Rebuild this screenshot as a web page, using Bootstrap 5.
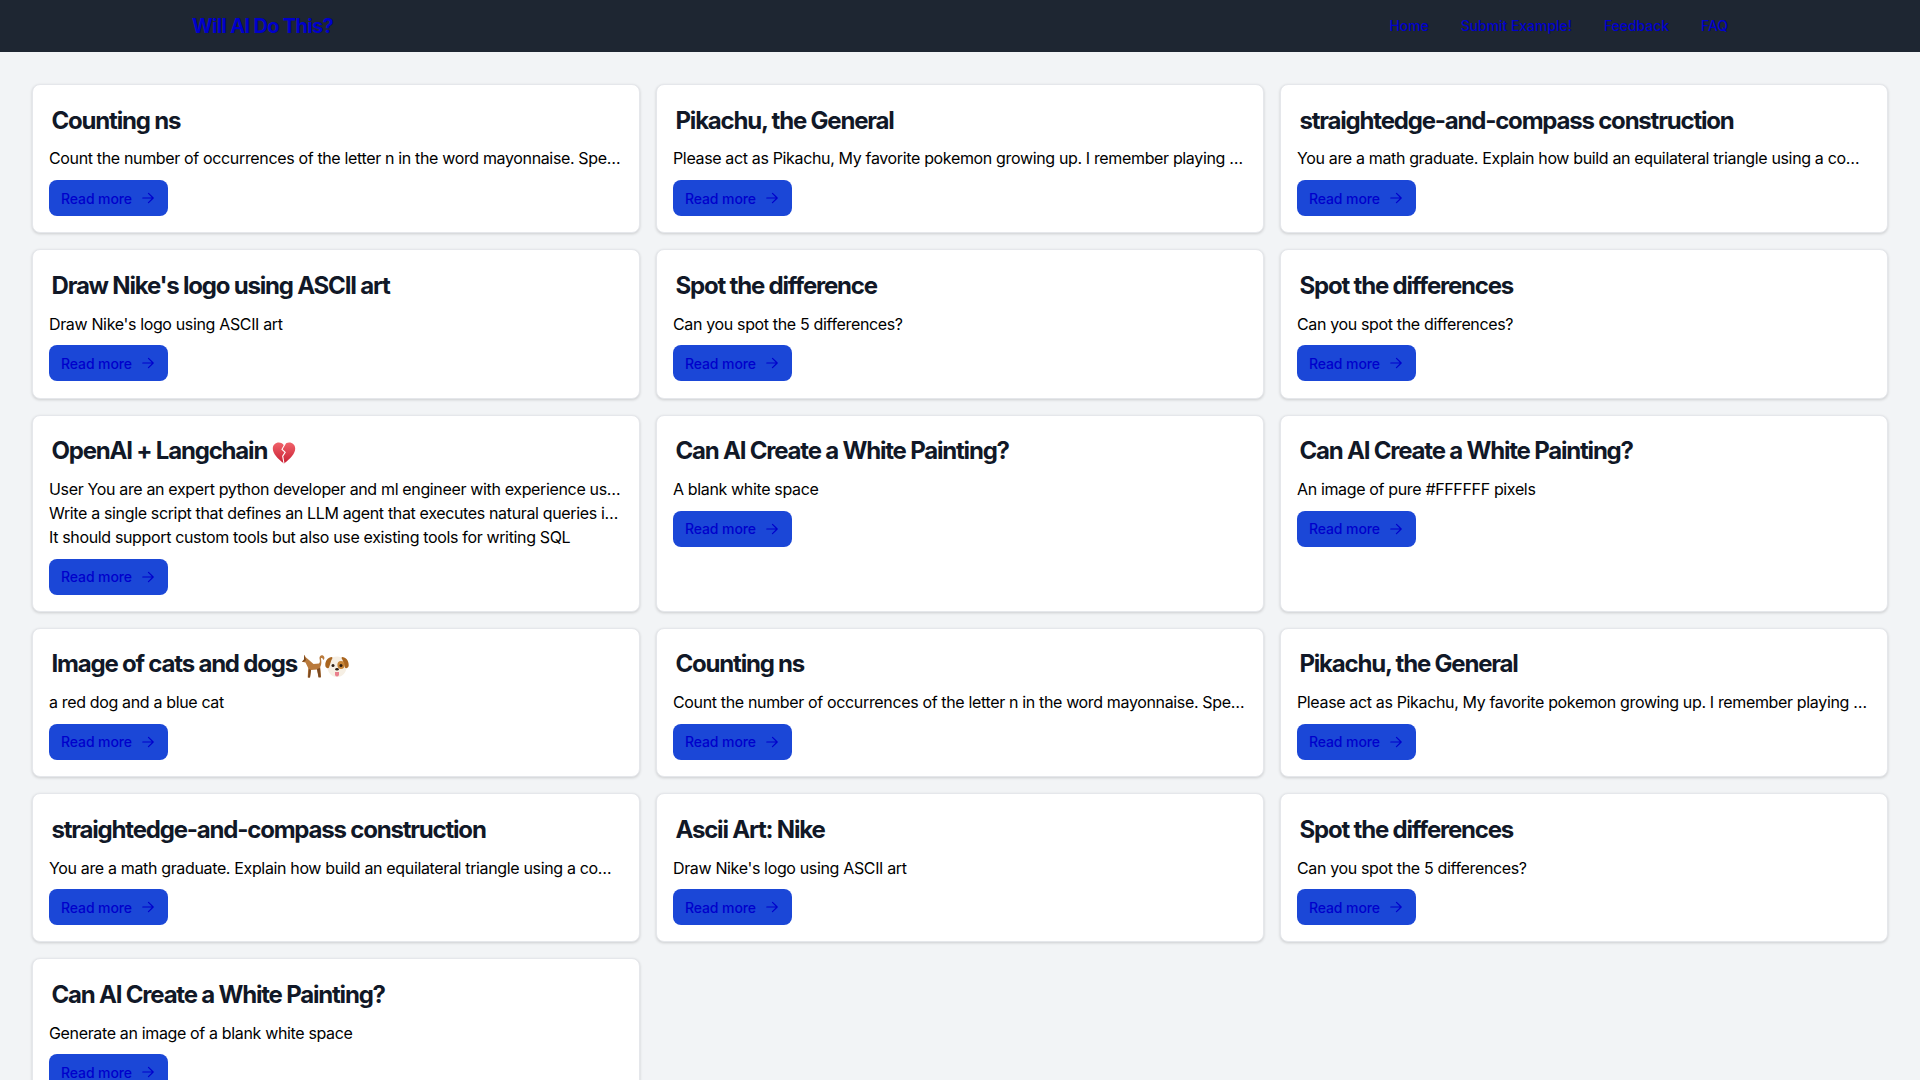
<!DOCTYPE html>
<html lang="en">
<head>
<meta charset="utf-8">
<title>Will AI Do This?</title>
<link href="https://cdn.jsdelivr.net/npm/bootstrap@5.3.0/dist/css/bootstrap.min.css" rel="stylesheet">
<style>
body{background:#f2f4f6;font-family:Inter,"Liberation Sans",sans-serif;color:#000;overflow:hidden;height:1080px}
.top-bar{background:#1e2632;height:52px;padding:0 192px}
.top-bar a{color:#0000cc;text-decoration:none}
.brand-link{font-size:20px;font-weight:700;line-height:28px;letter-spacing:-.7px}
.menu-link{font-size:14px;font-weight:500;letter-spacing:-.05px}
.menu-row{gap:32px;padding-bottom:2px}
.page-wrap{padding:32px}
.page-wrap .row{--bs-gutter-x:16px;--bs-gutter-y:16px}
.entry{background:#fff;border:1px solid #e5e7eb;border-radius:8px;box-shadow:0 1px 3px rgba(0,0,0,.16);padding:16px 16px 16.2px}
.entry-title{font-size:24px;font-weight:700;line-height:32px;letter-spacing:-1.2px;color:#111827;margin:0 0 9.8px;padding:3.7px 2.5px 0}
.entry-text{font-size:16px;line-height:24px;margin:0;letter-spacing:-.35px}
.entry-text+.read-btn{margin-top:9.6px}
.read-btn{background:#1b47d7;color:#0000cc;border-radius:8px;height:36px;width:119px;font-size:14px;font-weight:500;padding:0 12px;text-decoration:none;align-self:flex-start;justify-content:space-between;white-space:nowrap;letter-spacing:-.1px}
.read-btn svg{width:12px;height:12px;flex:none;margin-right:2px}
.emo{display:inline-block;height:24px;line-height:0;vertical-align:0}
</style>
</head>
<body>
<svg width="0" height="0" class="d-block">
  <defs>
    <symbol id="ar" viewBox="0 0 12 12"><path d="M.8 6h10.400M6.500 1.300 11.200 6l-4.700 4.700" fill="none" stroke="currentColor" stroke-width="1.200" stroke-linecap="round" stroke-linejoin="round"/></symbol>
    <linearGradient id="hg" x1="0" y1="0" x2="0" y2="1"><stop offset="0" stop-color="#f0626a"/><stop offset="1" stop-color="#c91f33"/></linearGradient>
  </defs>
</svg>
<nav class="top-bar d-flex align-items-center justify-content-between">
  <a class="brand-link" href="#">Will AI Do This?</a>
  <div class="menu-row d-flex">
    <a class="menu-link" href="#">Home</a>
    <a class="menu-link" href="#">Submit Example!</a>
    <a class="menu-link" href="#">Feedback</a>
    <a class="menu-link" href="#">FAQ</a>
  </div>
</nav>
<main class="page-wrap">
<div class="row row-cols-3">
<div class="col"><div class="entry h-100 d-flex flex-column"><h5 class="entry-title">Counting ns</h5><p class="entry-text text-truncate">Count the number of occurrences of the letter n in the word mayonnaise. Spell out each letter and count them.</p><a class="read-btn d-flex align-items-center" href="#">Read more <svg><use href="#ar"/></svg></a></div></div>
<div class="col"><div class="entry h-100 d-flex flex-column"><h5 class="entry-title">Pikachu, the General</h5><p class="entry-text text-truncate">Please act as Pikachu, My favorite pokemon growing up. I remember playing with all of my cards and friends.</p><a class="read-btn d-flex align-items-center" href="#">Read more <svg><use href="#ar"/></svg></a></div></div>
<div class="col"><div class="entry h-100 d-flex flex-column"><h5 class="entry-title">straightedge-and-compass construction</h5><p class="entry-text text-truncate">You are a math graduate. Explain how build an equilateral triangle using a compass and a straightedge.</p><a class="read-btn d-flex align-items-center" href="#">Read more <svg><use href="#ar"/></svg></a></div></div>
<div class="col"><div class="entry h-100 d-flex flex-column"><h5 class="entry-title">Draw Nike's logo using ASCII art</h5><p class="entry-text text-truncate">Draw Nike's logo using ASCII art</p><a class="read-btn d-flex align-items-center" href="#">Read more <svg><use href="#ar"/></svg></a></div></div>
<div class="col"><div class="entry h-100 d-flex flex-column"><h5 class="entry-title">Spot the difference</h5><p class="entry-text text-truncate">Can you spot the 5 differences?</p><a class="read-btn d-flex align-items-center" href="#">Read more <svg><use href="#ar"/></svg></a></div></div>
<div class="col"><div class="entry h-100 d-flex flex-column"><h5 class="entry-title">Spot the differences</h5><p class="entry-text text-truncate">Can you spot the differences?</p><a class="read-btn d-flex align-items-center" href="#">Read more <svg><use href="#ar"/></svg></a></div></div>
<div class="col"><div class="entry h-100 d-flex flex-column"><h5 class="entry-title">OpenAI + Langchain <span class="emo"><svg width="24" height="24" viewBox="0 0 24 24"><path d="M12 22.500C5.500 17.500.8 12.700.8 7.500.8 4 3.500 1.500 6.800 1.500 9 1.500 11 2.700 12 4.400 13 2.700 15 1.500 17.200 1.500 20.500 1.500 23.200 4 23.200 7.500 23.200 12.700 18.500 17.500 12 22.500z" fill="url(#hg)"/><path d="M13.500 2.300 10 8.300l3.200 3-2.500 3.800 1.300 7.400" fill="none" stroke="#fff" stroke-width="1.100"/></svg></span></h5><p class="entry-text text-truncate">User You are an expert python developer and ml engineer with experience using LangChain and SQL</p><p class="entry-text text-truncate">Write a single script that defines an LLM agent that executes natural queries in a SQL database</p><p class="entry-text text-truncate">It should support custom tools but also use existing tools for writing SQL</p><a class="read-btn d-flex align-items-center" href="#">Read more <svg><use href="#ar"/></svg></a></div></div>
<div class="col"><div class="entry h-100 d-flex flex-column"><h5 class="entry-title">Can AI Create a White Painting?</h5><p class="entry-text text-truncate">A blank white space</p><a class="read-btn d-flex align-items-center" href="#">Read more <svg><use href="#ar"/></svg></a></div></div>
<div class="col"><div class="entry h-100 d-flex flex-column"><h5 class="entry-title">Can AI Create a White Painting?</h5><p class="entry-text text-truncate">An image of pure #FFFFFF pixels</p><a class="read-btn d-flex align-items-center" href="#">Read more <svg><use href="#ar"/></svg></a></div></div>
<div class="col"><div class="entry h-100 d-flex flex-column"><h5 class="entry-title">Image of cats and dogs <span class="emo"><svg width="24" height="24" viewBox="0 0 24 24"><path d="M3 .8 5 3.500 8 6l4.500 4L18 9.500c1.200-1 1-3 .5-5C18.200 2.500 20 .5 22 1.500c1.800 1 1.800 3.500.5 4.500l-1-1.500c-.5-.8-1.800-.5-1.500.5.500 2.500.7 5.500-.8 8l.8 10h-2.300L16 15.500 10 16l-1 7.500H6.700L7.200 14 4.500 8.500 1 7.800 3 5.500z" fill="#b97a3c"/><path d="M3 .8 5.200 6 3 7.800 1 7.800 3 5.500zM8 15l2 1-1 7.500H7zM16 15l3-1 .8 9.500H17.500z" fill="#7c4a20"/></svg></span><span class="emo"><svg width="24" height="24" viewBox="0 0 24 24"><path d="M12 2.500c6 0 9.500 4 9.500 10S17.500 23 12 23 2.500 18.500 2.500 12.500 6 2.500 12 2.500z" fill="#f6efe4"/><path d="M7 3C3 3 0 7 .3 11.500c.2 2.500 3 3.500 3.700 2 1-2 1.500-6.500 3.500-9.500zM17 3c4 0 7 4 6.700 8.500-.2 2.500-3 3.500-3.700 2-1-2-1.500-6.500-3.500-9.500z" fill="#a9651f"/><ellipse cx="16" cy="11" rx="3.600" ry="4" fill="#c68436"/><circle cx="8" cy="11.500" r="1.500" fill="#2b1c12"/><circle cx="16" cy="11.500" r="1.500" fill="#2b1c12"/><ellipse cx="12" cy="15.300" rx="1.800" ry="1.300" fill="#2b1c12"/><path d="M10 18h4v2.600a2 2 0 0 1-4 0z" fill="#ea7f8d"/></svg></span></h5><p class="entry-text text-truncate">a red dog and a blue cat</p><a class="read-btn d-flex align-items-center" href="#">Read more <svg><use href="#ar"/></svg></a></div></div>
<div class="col"><div class="entry h-100 d-flex flex-column"><h5 class="entry-title">Counting ns</h5><p class="entry-text text-truncate">Count the number of occurrences of the letter n in the word mayonnaise. Spell out each letter and count them.</p><a class="read-btn d-flex align-items-center" href="#">Read more <svg><use href="#ar"/></svg></a></div></div>
<div class="col"><div class="entry h-100 d-flex flex-column"><h5 class="entry-title">Pikachu, the General</h5><p class="entry-text text-truncate">Please act as Pikachu, My favorite pokemon growing up. I remember playing with all of my cards and friends.</p><a class="read-btn d-flex align-items-center" href="#">Read more <svg><use href="#ar"/></svg></a></div></div>
<div class="col"><div class="entry h-100 d-flex flex-column"><h5 class="entry-title">straightedge-and-compass construction</h5><p class="entry-text text-truncate">You are a math graduate. Explain how build an equilateral triangle using a compass and a straightedge.</p><a class="read-btn d-flex align-items-center" href="#">Read more <svg><use href="#ar"/></svg></a></div></div>
<div class="col"><div class="entry h-100 d-flex flex-column"><h5 class="entry-title">Ascii Art: Nike</h5><p class="entry-text text-truncate">Draw Nike's logo using ASCII art</p><a class="read-btn d-flex align-items-center" href="#">Read more <svg><use href="#ar"/></svg></a></div></div>
<div class="col"><div class="entry h-100 d-flex flex-column"><h5 class="entry-title">Spot the differences</h5><p class="entry-text text-truncate">Can you spot the 5 differences?</p><a class="read-btn d-flex align-items-center" href="#">Read more <svg><use href="#ar"/></svg></a></div></div>
<div class="col"><div class="entry h-100 d-flex flex-column"><h5 class="entry-title">Can AI Create a White Painting?</h5><p class="entry-text text-truncate">Generate an image of a blank white space</p><a class="read-btn d-flex align-items-center" href="#">Read more <svg><use href="#ar"/></svg></a></div></div>
</div>
</main>
</body>
</html>
